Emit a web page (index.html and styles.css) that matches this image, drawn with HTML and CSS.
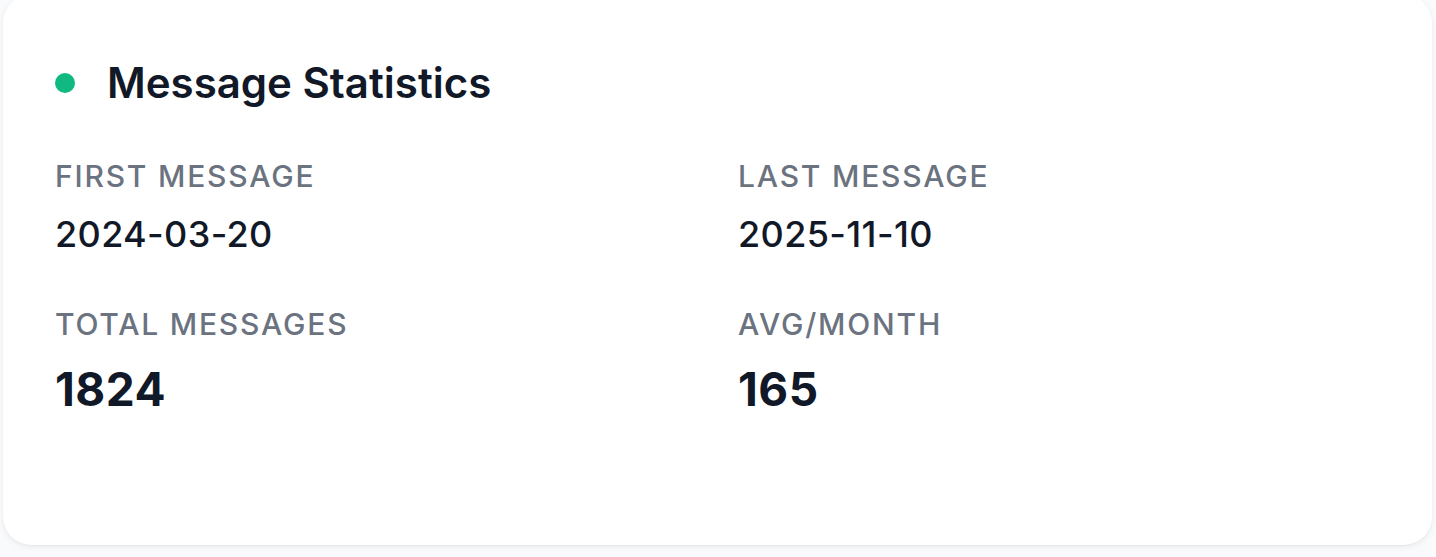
FILE: index.html
```html
<!DOCTYPE html>
<html lang="en">
<head>
<meta charset="utf-8">
<title>Message Statistics</title>
<link rel="stylesheet" href="styles.css">
</head>
<body>
  <section class="card">
    <header class="card-header">
      <span class="dot"></span>
      <h2 class="title">Message Statistics</h2>
    </header>
    <div class="stats">
      <div class="stat">
        <div class="label">First Message</div>
        <div class="value">2024-03-20</div>
      </div>
      <div class="stat">
        <div class="label">Last Message</div>
        <div class="value">2025-11-10</div>
      </div>
      <div class="stat">
        <div class="label">Total Messages</div>
        <div class="value value-lg">1824</div>
      </div>
      <div class="stat">
        <div class="label">Avg/Month</div>
        <div class="value value-lg">165</div>
      </div>
    </div>
  </section>
</body>
</html>
```

FILE: styles.css
```css
* { box-sizing: border-box; }

html, body {
  margin: 0;
  padding: 0;
  height: 100%;
}

body {
  background: #f9fafb;
  font-family: Inter, "Noto Sans", "Liberation Sans", sans-serif;
  color: #111827;
  overflow: hidden;
}

.card {
  margin: -5px 4px 0 3px;
  height: 550px;
  background: #ffffff;
  border-radius: 28px;
  box-shadow: 0 2px 6px rgba(17, 24, 39, 0.06), 0 1px 2px rgba(17, 24, 39, 0.04);
  padding: 60px 52px 0 52px;
}

.card-header {
  display: flex;
  align-items: center;
  gap: 32px;
}

.dot {
  width: 20px;
  height: 20px;
  border-radius: 50%;
  background: #10b981;
  flex: none;
}

.title {
  margin: 0;
  font-size: 42px;
  line-height: 56px;
  font-weight: 600;
  color: #111827;
}

.stats {
  display: grid;
  grid-template-columns: 1fr 1fr;
  column-gap: 41px;
  row-gap: 46px;
  margin-top: 45px;
}

.label {
  font-size: 30px;
  line-height: 40px;
  font-weight: 500;
  text-transform: uppercase;
  letter-spacing: 0.06em;
  color: #6b7280;
}

.value {
  margin-top: 14px;
  font-size: 36px;
  line-height: 48px;
  font-weight: 500;
  letter-spacing: 0.01em;
  color: #111827;
}

.value-lg {
  font-size: 46px;
  line-height: 62px;
  font-weight: 700;
  letter-spacing: 0.01em;
}
```
